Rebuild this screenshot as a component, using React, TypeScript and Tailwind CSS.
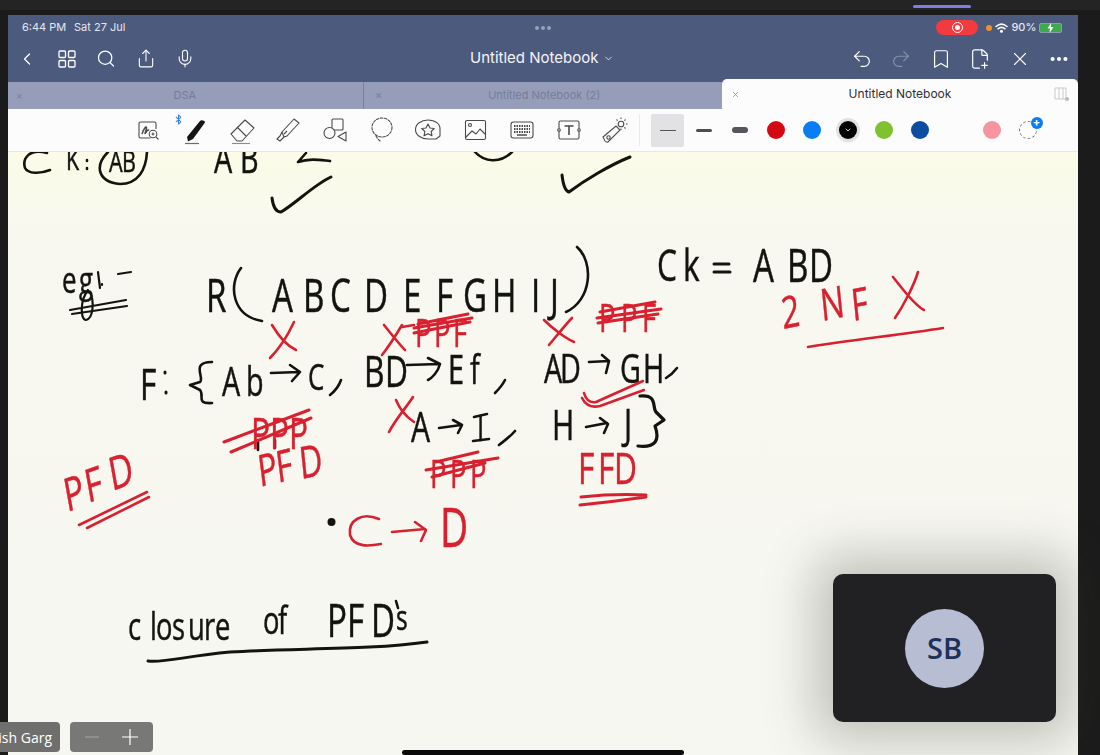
import React from "react";
import { Bluetooth, ChevronDown, ChevronLeft, Bookmark, Ellipsis, FilePlus2, Mic, Redo2, Search, Share, Undo2, X } from "lucide-react";

const RED = "#d8202f";
const INK = "#14140f";
const SQUEEZE = 0.72;

// letters of the note, real text with one x per glyph, squeezed to the narrow hand
function Note({ x, y, size, color = INK, rotate, children }: { x: string; y: string | number; size: number; color?: string; rotate?: string; children: string }) {
  const xs = x.split(" ").map((v) => Number(v) / SQUEEZE).join(" ");
  return (
    <g transform={`scale(${SQUEEZE} 1)`}>
      <text x={xs} y={y} fontSize={size} fill={color} rotate={rotate} stroke={color} strokeWidth={0.5}>
        {children}
      </text>
    </g>
  );
}

function Mark({ d, color = INK, w = 2.6 }: { d: string; color?: string; w?: number }) {
  return <path d={d} fill="none" stroke={color} strokeWidth={w} strokeLinecap="round" strokeLinejoin="round" />;
}

function NotePage() {
  return (
    <svg viewBox="8 152 1070 603" className="block w-full h-full blur-[0.35px] font-['Open_Sans',sans-serif]">
      {/* stuff scrolled under the toolbar */}
      <Mark d="M47 153 C30 148 22 158 25 168 C28 174 40 174 50 170" />
      <Note x="66" y="170" size={30}>K</Note>
      <Mark d="M87 160v1M87 168v1" />
      <Mark d="M108 152 C94 166 98 182 120 184 C138 184 146 170 147 152" />
      <Note x="109 122" y="172" size={30}>AB</Note>
      <Note x="214 240" y="173" size={40}>AB</Note>
      <Mark d="M306 153 L298 162 C310 158 320 160 330 161" />
      <Mark d="M475 152 C484 162 500 164 512 152" />
      <Mark d="M272 198 C273 206 276 212 281 212 C295 204 315 184 331 177" w={3} />
      <Mark d="M562 175 C563 184 565 191 569 192 C585 180 610 165 630 157" w={3} />

      {/* eg:- */}
      <Note x="62 79" y="293" size={36}>eg</Note>
      <Mark d="M98 272 L100 288M102 284 L102 285M118 274 L131 272" w={2.2} />
      <Mark d="M70 310 L126 300M72 314 L127 306M88 290 C80 300 80 320 86 320 C94 318 94 300 90 292" w={2.2} />

      {/* R(ABCDEFGHIJ) */}
      <Note x="206 272 303 330 364 403 436 463 492 531 550" y="312" size={46}>RABCDEFGHIJ</Note>
      <Mark d="M241 268 C228 285 232 316 262 321" />
      <Mark d="M577 247 C594 262 592 300 566 312" />

      {/* Ck = ABD */}
      <Note x="657 683" y="281" size={44}>Ck</Note>
      <Mark d="M714 264 L729 264M714 272 L730 272" w={3} />
      <Note x="753 787 809" y="282" size={46}>ABD</Note>

      {/* 2NF X */}
      <Note x="783 822 853" y="329 321 321" size={44} color={RED} rotate="-8 -8 -8">2NF</Note>
      <Mark d="M893 277 C902 288 914 305 924 310M918 272 C914 285 904 305 895 318" color={RED} />
      <Mark d="M808 347 C850 340 900 335 943 328" color={RED} />

      {/* crossed out above the first row */}
      <Mark d="M294 322 C288 335 278 350 270 358M272 325 C278 335 285 345 296 350" color={RED} />
      <Mark d="M384 325 C392 335 400 345 405 350M402 325 C396 335 390 345 382 355M402 327 L414 325" color={RED} />
      <Note x="415 434 453" y="347" size={38} color={RED}>PPF</Note>
      <Mark d="M414 328 L472 318M414 333 L470 322M418 324 L468 314" color={RED} w={3} />
      <Mark d="M544 320 C552 328 565 338 574 342M572 318 C565 325 555 338 549 345" color={RED} />
      <Note x="599 621 642" y="332" size={38} color={RED}>PPF</Note>
      <Mark d="M597 318 L661 309M600 312 L655 302M598 323 L658 314" color={RED} w={3} />

      {/* F: { AB -> C, BD -> EF, AD -> GH, */}
      <Note x="140" y="400" size={44}>F</Note>
      <Mark d="M165 372v1M166 392v1" w={3} />
      <Mark d="M212 362 C190 362 205 378 200 382 L190 385 L200 390 C205 396 195 404 212 403" />
      <Note x="222 246" y="396" size={40}>Ab</Note>
      <Mark d="M271 373 L299 372M290 365 L300 372 L292 381" />
      <Note x="308" y="390" size={36}>C</Note>
      <Mark d="M341 380 C339 386 335 391 330 395" />
      <Note x="364 385" y="387" size={44}>BD</Note>
      <Mark d="M407 365 L439 364M428 358 L440 364 C438 372 432 378 428 380" />
      <Note x="448 470" y="384" size={40}>Ef</Note>
      <Mark d="M505 380 C502 386 499 389 495 393" />
      <Note x="544 560" y="383" size={40}>AD</Note>
      <Mark d="M589 362 L609 361M602 355 L609 361 L606 373" />
      <Note x="620 643" y="383" size={40}>GH</Note>
      <Mark d="M677 368 C674 372 671 375 666 378" />

      {/* double tick */}
      <Mark d="M584 393 C586 400 590 403 596 402 L643 381M582 398 C586 406 592 408 600 406 L644 390" color={RED} />

      {/* A -> I, H -> J } */}
      <Note x="411" y="442" size={42}>A</Note>
      <Mark d="M439 428 L461 425M453 420 L462 425 L458 433" />
      <Note x="477" y="441" size={36}>I</Note>
      <Mark d="M474 417 L487 414M473 441 L489 439" />
      <Mark d="M515 431 C510 437 504 441 499 445" />
      <Note x="552" y="440" size={42}>H</Note>
      <Mark d="M586 427 L607 423M600 418 L608 424 L604 433" />
      <Note x="624" y="439" size={42}>J</Note>
      <Mark d="M640 396 C658 394 652 408 656 412 L664 420 L655 426 C660 440 656 448 638 446" w={3.2} />

      {/* red column two */}
      <Mark d="M413 397 C408 405 395 420 389 432M396 400 C400 410 408 418 414 422" color={RED} />
      <Mark d="M258 440 L258 450M275 440 L275 448" />
      <Note x="251 270 289" y="449" size={44} color={RED}>PPP</Note>
      <Mark d="M224 442 L309 410M231 452 L311 418" color={RED} w={3} />
      <Note x="260 278" y="487 483" size={44} color={RED} rotate="-10 -10">PF</Note>
      <Note x="301" y="479" size={44} color={RED} rotate="-8">D</Note>
      <Note x="430 450 470" y="488" size={38} color={RED}>PPP</Note>
      <Mark d="M426 470 L498 458M432 477 L485 463M436 462 L478 452" color={RED} w={3} />
      <Note x="578 598 614" y="484" size={44} color={RED}>FFD</Note>
      <Mark d="M581 497 C600 495 625 494 646 495M580 505 C600 503 625 500 646 497" color={RED} w={3} />

      {/* PFD, left */}
      <Note x="67 88 112" y="512 503 491" size={46} color={RED} rotate="-14 -14 -14">PFD</Note>
      <Mark d="M79 525 L147 492M87 528 L149 497" color={RED} />

      {/* . C -> D */}
      <circle cx="331.500" cy="522" r="4" fill={INK} />
      <Mark d="M379 519 C362 512 348 520 350 535 C354 548 370 546 381 544" color={RED} />
      <Mark d="M392 532 L425 529M415 522 L426 530 L421 541" color={RED} />
      <Note x="440" y="547" size={54} color={RED}>D</Note>

      {/* closure of PFD's */}
      <Note x="128 150 156 172 188 204 215" y="640" size={38}>closure</Note>
      <Note x="263 278" y="634" size={38}>of</Note>
      <Note x="327 347 371" y="637" size={46}>PFD</Note>
      <Mark d="M396 601 L398 608" />
      <Note x="396" y="630" size={34}>s</Note>
      <Mark d="M148 661 C165 663 185 656 230 652 C300 648 370 650 427 642" w={3} />
    </svg>
  );
}

function GridIcon() {
  return (
    <svg width="18" height="18" viewBox="0 0 18 18" fill="none" stroke="currentColor" strokeWidth="1.3">
      <rect x="1" y="1" width="6.500" height="6.500" rx="1" />
      <rect x="10.500" y="1" width="6.500" height="6.500" rx="1" />
      <rect x="1" y="10.500" width="6.500" height="6.500" rx="1" />
      <rect x="10.500" y="10.500" width="6.500" height="6.500" rx="1" />
    </svg>
  );
}

function Tool({ children }: { children: React.ReactNode }) {
  return <div className="relative w-[46.7px] flex items-center justify-center text-[#4a4a4c]">{children}</div>;
}

function Svg({ children }: { children: React.ReactNode }) {
  return (
    <svg width="26" height="26" viewBox="0 0 26 26" fill="none" stroke="currentColor" strokeWidth="1.1" strokeLinecap="round" strokeLinejoin="round">
      {children}
    </svg>
  );
}

function Swatch({ children }: { children: React.ReactNode }) {
  return <div className="relative w-9 h-[33px] flex items-center justify-center">{children}</div>;
}

export default function App() {
  return (
    <div className="relative h-screen w-full overflow-hidden bg-[#1b1b1b] font-['Inter',sans-serif]">
      <div className="h-[10px] bg-[#242424] flex">
        <div className="ml-[913px] mt-[5px] w-[58px] h-[3px] rounded-full bg-[#7b7fe6]" />
      </div>
      <div className="h-[5px]" />
      <div className="ml-2 w-[1070px] h-[740px] flex flex-col">
        <div className="bg-[#4c5a7e] text-white">
          <div className="h-[23px] pt-[2px] pl-[14px] pr-[14px] flex items-center text-[11px] text-[#e4e7f0]">
            <span className="w-[52px]">6:44 PM</span>
            <span>Sat 27 Jul</span>
            <div className="ml-[410px] flex gap-[2px]">
              <i className="block w-[4px] h-[4px] rounded-full bg-[#97a0b8]" />
              <i className="block w-[4px] h-[4px] rounded-full bg-[#97a0b8]" />
              <i className="block w-[4px] h-[4px] rounded-full bg-[#97a0b8]" />
            </div>
            <div className="ml-[385px] w-[42px] h-[15px] rounded-full bg-[#f23b3f] flex items-center justify-center">
              <div className="w-[11px] h-[11px] rounded-full border border-white flex items-center justify-center">
                <div className="w-[5px] h-[5px] rounded-full bg-white" />
              </div>
            </div>
            <div className="ml-[8px] w-[6px] h-[6px] rounded-full bg-[#f0902a]" />
            <svg className="ml-[3px]" width="13" height="10" viewBox="0 0 13 10" fill="none" stroke="#fff" strokeWidth="1.500" strokeLinecap="round">
              <path d="M1 3.500C4.500.5 8.500.5 12 3.500M3 5.800c2.200-1.800 4.800-1.800 7 0" />
              <circle cx="6.500" cy="8.300" r=".8" fill="#fff" />
            </svg>
            <span className="ml-[3px] text-[11px] font-medium">90%</span>
            <div className="ml-[3px] w-[23px] h-[10px] rounded-[2px] border border-[#8d9ab0] flex items-center justify-center bg-[#3ea94d]">
              <svg width="7" height="10" viewBox="0 0 7 10" fill="#fff"><path d="M4 0 .5 5.500H3L2.500 10 6.500 4H4z" /></svg>
            </div>
          </div>
          <div className="h-[44px] pb-[3px] flex items-center relative">
            <div className="pl-[9px] flex items-center">
              <div className="w-[20px] flex justify-center"><ChevronLeft size={26} strokeWidth={1.500} /></div>
              <div className="ml-[20px] w-[20px] flex justify-center"><GridIcon /></div>
              <div className="ml-[19px] w-[20px] flex justify-center"><Search size={21} strokeWidth={1.500} /></div>
              <div className="ml-[20px] w-[20px] flex justify-center"><Share size={21} strokeWidth={1.300} /></div>
              <div className="ml-[19px] w-[20px] flex justify-center"><Mic size={21} strokeWidth={1.300} /></div>
            </div>
            <div className="ml-[275px] flex items-center gap-[5px] text-[15px] font-normal text-[#f4f5f8]">
              Untitled Notebook
              <ChevronDown size={11} strokeWidth={1.800} />
            </div>
            <div className="ml-auto pr-[8px] flex items-center gap-[17.500px]">
              <Undo2 size={22} strokeWidth={1.300} />
              <Redo2 size={22} strokeWidth={1.300} className="text-[#8791a8]" />
              <Bookmark size={22} strokeWidth={1.300} />
              <FilePlus2 size={22} strokeWidth={1.300} />
              <X size={22} strokeWidth={1.200} />
              <Ellipsis size={22} strokeWidth={2.500} />
            </div>
          </div>
          <div className="h-[27px] flex text-[11px] text-[#757d98]">
            <div className="w-[356px] bg-[#959db8] border-r border-[#78819c] flex items-center px-2">
              <span className="text-[10px]">×</span>
              <span className="flex-1 text-center pr-2">DSA</span>
            </div>
            <div className="w-[358px] bg-[#959db8] flex items-center px-2 pl-[11px]">
              <span>×</span>
              <span className="flex-1 text-center pr-2">Untitled Notebook (2)</span>
            </div>
            <div className="relative flex-1 h-[30px] -mt-[3px] bg-[#fdfcfd] rounded-t-[5px] flex items-center pl-[9px] pr-[8px] text-[#2e2e32]">
              <X size={9} className="text-[#8a8a8a]" />
              <span className="flex-1 text-center text-[12px] pl-[6px]">Untitled Notebook</span>
              <svg width="16" height="16" viewBox="0 0 16 16" fill="none" stroke="#c9c9cc" strokeWidth="1">
                <path d="M1 2h11v11H1zM5 2v11M9 2v11" />
                <circle cx="13" cy="13" r="2" fill="#b9b9bd" stroke="none" />
              </svg>
            </div>
          </div>
        </div>

        <div className="h-[43px] shrink-0 bg-[#fdfcfd] border-b border-[#e9e8e1] flex items-center pl-[117px] relative z-10">
          <Tool>
            <svg width="24" height="24" viewBox="0 0 24 24" fill="none" stroke="currentColor" strokeWidth="1.100">
              <path d="M20 11V5.500A1.500 1.500 0 0 0 18.500 4h-14A1.500 1.500 0 0 0 3 5.500v13A1.500 1.500 0 0 0 4.500 20h10" />
              <path d="M6 16c2-6 4-8 4.500-6.500S8 17 9.500 15 12 11 13 12.500" strokeWidth="1.500" />
              <circle cx="17" cy="16" r="3.800" />
              <path d="M20 19l2.500 2.500M15.500 16h3M17 14.500v3" />
            </svg>
          </Tool>
          <Tool>
            <Bluetooth size={11} strokeWidth={2.200} className="absolute left-[1px] -top-[1px] text-[#2f80e0]" />
            <svg width="26" height="30" viewBox="0 0 26 30" fill="none">
              <path d="M5 22 18 6c1-1.500 5-.5 5 1.500L11 24l-5 2.500z" fill="#151515" />
              <path d="M3 28.500h14" stroke="#6b6b6b" strokeWidth="1.200" />
            </svg>
          </Tool>
          <Tool>
            <svg width="28" height="30" viewBox="0 0 28 30" fill="none" stroke="currentColor" strokeWidth="1.100" strokeLinejoin="round">
              <path d="M3 19 17 5l9 8-12 13H9z" />
              <path d="M9 12l9 9" />
              <path d="M4 28.500h18" stroke="#8b8b8b" />
            </svg>
          </Tool>
          <Tool>
            <svg width="28" height="28" viewBox="0 0 28 28" fill="none" stroke="currentColor" strokeWidth="1.100" strokeLinejoin="round">
              <path d="M8 16 20 3l5 4-12 13-3 1z" />
              <path d="M8 16l-2 4-3 3 3 2 3-3 1-1" />
              <path d="M10 18l3-3" />
            </svg>
          </Tool>
          <Tool>
            <svg width="26" height="26" viewBox="0 0 26 26" fill="none" stroke="currentColor" strokeWidth="1.100" strokeLinejoin="round">
              <rect x="10" y="2" width="11" height="11" rx="1" fill="#fdfcfd" />
              <circle cx="7.500" cy="16" r="5.500" fill="#fdfcfd" />
              <path d="M24 15v9l-8-4.500z" fill="#fdfcfd" />
            </svg>
          </Tool>
          <Tool>
            <svg width="24" height="26" viewBox="0 0 24 26" fill="none" stroke="currentColor" strokeWidth="1.100" strokeDasharray="2.500 1.500" strokeLinecap="round">
              <ellipse cx="12" cy="10.500" rx="10" ry="9.500" />
              <path d="M6 19c1 2 3 4 4 5" />
            </svg>
          </Tool>
          <Tool>
            <svg width="28" height="24" viewBox="0 0 28 24" fill="none" stroke="currentColor" strokeWidth="1.100" strokeLinejoin="round">
              <path d="M14 2C7 2 1.500 6 1.500 11.500S7 21 14 21h8l4-3V11.500C26.500 6 21 2 14 2z" />
              <path d="m14 6 2 4 4.300.5-3.200 3 .9 4.300L14 15.700l-4 2.100.9-4.300-3.200-3L12 10z" />
            </svg>
          </Tool>
          <Tool>
            <Svg>
              <rect x="3.500" y="3.500" width="20" height="19" rx="1.500" />
              <circle cx="8" cy="8" r="1.500" />
              <path d="M4 20l6-6 4 3 4-5 5 5" />
            </Svg>
          </Tool>
          <Tool>
            <svg width="24" height="18" viewBox="0 0 24 18" fill="none" stroke="currentColor" strokeWidth="1.100">
              <rect x="1" y="1" width="22" height="16" rx="2.500" />
              <path d="M4 5h16M4 8h16M4 11h16" strokeDasharray="1.500 1" strokeWidth="1.800" />
              <path d="M7 14h10" strokeWidth="1.500" />
            </svg>
          </Tool>
          <Tool>
            <svg width="26" height="22" viewBox="0 0 26 22" fill="none" stroke="currentColor" strokeWidth="1.100">
              <rect x="3" y="2" width="20" height="18" rx="1.500" />
              <path d="M8.500 7h9M13 7v9" strokeWidth="1.600" />
              <circle cx="3" cy="11" r="1.300" fill="#fdfcfd" />
              <circle cx="23" cy="11" r="1.300" fill="#fdfcfd" />
            </svg>
          </Tool>
          <Tool>
            <svg width="28" height="28" viewBox="0 0 28 28" fill="none" stroke="currentColor" strokeWidth="1.100">
              <path d="M2 21 15 10l4 4L7 26a3 3 0 0 1-3-1z" />
              <circle cx="7.500" cy="21.500" r="1.700" />
              <circle cx="20" cy="8" r="2.800" />
              <path d="M20 1.500v2M20 12.500v2M26.500 8h-2M15.500 3.500l1.300 1.300M24.500 3.500l-1.300 1.300M24.500 12.500l-1.300-1.300" strokeDasharray="1.500 .8" />
            </svg>
          </Tool>
          <div className="w-px h-[32px] bg-[#ecebe8]" />
          <div className="ml-[10px] flex items-center">
            <Swatch>
              <div className="w-[33px] h-[33px] bg-[#e2e2e4] rounded-[2px] flex items-center justify-center">
                <div className="w-[16px] h-px bg-[#55565a]" />
              </div>
            </Swatch>
            <Swatch><div className="w-[16px] h-[3px] rounded-full bg-[#4d4e52]" /></Swatch>
            <Swatch><div className="w-[16px] h-[6px] rounded-full bg-[#55565a]" /></Swatch>
            <Swatch><div className="w-[18px] h-[18px] rounded-full bg-[#d40a12]" /></Swatch>
            <Swatch><div className="w-[18px] h-[18px] rounded-full bg-[#0a7df5]" /></Swatch>
            <Swatch>
              <div className="w-[24px] h-[24px] rounded-full bg-[#e3e0e2] flex items-center justify-center">
                <div className="w-[18px] h-[18px] rounded-full bg-black flex items-center justify-center">
                  <ChevronDown size={8} strokeWidth={2.500} className="text-white" />
                </div>
              </div>
            </Swatch>
            <Swatch><div className="w-[18px] h-[18px] rounded-full bg-[#7fc12f]" /></Swatch>
            <Swatch><div className="w-[18px] h-[18px] rounded-full bg-[#0b4da0]" /></Swatch>
            <Swatch><div className="w-[18px] h-[18px] rounded-full bg-[#fdfcfd]" /></Swatch>
            <Swatch><div className="w-[18px] h-[18px] rounded-full bg-[#f6949f]" /></Swatch>
            <Swatch>
              <div className="w-[18px] h-[18px] rounded-full border border-dashed border-[#6f6f6f]" />
              <div className="absolute right-[3px] top-[3px] w-[12px] h-[12px] rounded-full bg-[#0a7df5] text-white flex items-center justify-center text-[11px] leading-none font-bold">+</div>
            </Swatch>
          </div>
        </div>

        <div className="flex-1 min-h-0 overflow-hidden bg-gradient-to-b from-[#fbfbe8] via-[#f8f8f0] via-[15%] to-[#f6f7f0]">
          <NotePage />
        </div>
      </div>

      {/* meeting overlays */}
      <div className="absolute left-0 top-[722px] w-[60px] h-[30px] bg-[#6f706e] rounded-r-[4px] flex items-center justify-end pr-[8px] whitespace-nowrap text-white text-[14px] font-['Open_Sans',sans-serif]">
        ish Garg
      </div>
      <div className="absolute left-[70px] top-[722px] w-[83px] h-[30px] bg-[#787977] rounded-[4px] flex items-center justify-around px-[4px]">
        <div className="w-[14px] h-[2px] bg-[#8f908e]" />
        <svg width="16" height="16" viewBox="0 0 16 16" stroke="#fff" strokeWidth="1.200"><path d="M0 8h16M8 0v16" /></svg>
      </div>
      <div className="absolute left-[833px] top-[574px] w-[223px] h-[148px] rounded-[10px] bg-[#212023] shadow-[0_0_50px_20px_rgba(60,60,50,0.28)] flex items-center justify-center">
        <div className="w-[79px] h-[79px] rounded-full bg-[#b7bed3] flex items-center justify-center text-[#1e3058] text-[29px] font-semibold font-['Open_Sans',sans-serif]">
          SB
        </div>
      </div>
      <div className="absolute left-[402px] top-[750px] w-[282px] h-[5px] rounded-full bg-[#0a0a0a]" />
    </div>
  );
}
